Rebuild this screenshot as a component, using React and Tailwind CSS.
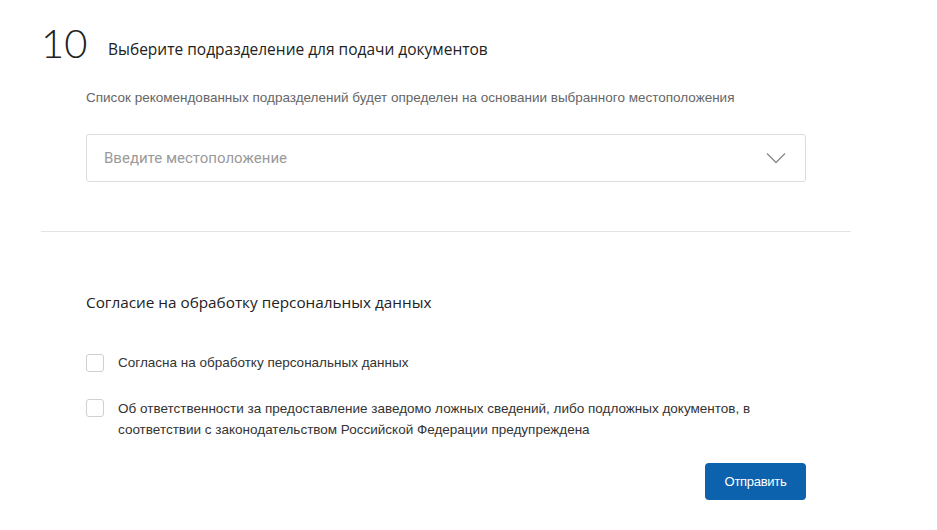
export default function App() {
  return (
    <div className="w-[937px] h-[530px] bg-white overflow-hidden" style={{ fontFamily: '"Liberation Sans", Arial, sans-serif' }}>
      <div className="pl-[41px] pt-[23px] w-[851px]">
        <div className="flex items-end">
          <span className="w-[46px] text-[40px] leading-[40px] text-[#222]" style={{ fontFamily: 'Lato, sans-serif', fontWeight: 300 }}>10</span>
          <span className="ml-[21px] mb-[4px] text-[15.5px] leading-[20px] font-medium text-[#222]" style={{ fontFamily: '"Open Sans", sans-serif' }}>Выберите подразделение для подачи документов</span>
        </div>
        <div className="pl-[45px]">
          <p className="mt-[27px] text-[13.5px] leading-[16px] text-[#666]">Список рекомендованных подразделений будет определен на основании выбранного местоположения</p>
          <div className="mt-[28px] w-[720px] h-[48px] border border-[#dcdcdc] rounded-[3px] flex items-center justify-between pl-[17px] pr-[19px]">
            <span className="text-[15px] text-[#9a9a9a]" style={{ fontFamily: 'Roboto, sans-serif' }}>Введите местоположение</span>
            <svg width="20" height="12" viewBox="0 0 20 12" fill="none">
              <path d="M1 1.5 L10 10.5 L19 1.5" stroke="#8a8a8a" strokeWidth="1.3" />
            </svg>
          </div>
        </div>
        <div className="mt-[49px] border-t border-[#e3e3e3]" />
        <div className="pl-[45px]">
          <h2 className="mt-[60px] text-[15.3px] leading-[20px] font-medium text-[#222]" style={{ fontFamily: '"Open Sans", sans-serif' }}>Согласие на обработку персональных данных</h2>
          <div className="mt-[40px] flex items-center gap-[14px]">
            <span className="w-[18px] h-[18px] border border-[#d0d0d0] rounded-[3px] shrink-0" />
            <span className="text-[13.5px] leading-[21px] text-[#333]">Согласна на обработку персональных данных</span>
          </div>
          <div className="mt-[25px] flex items-start gap-[14px]">
            <span className="mt-[1px] w-[18px] h-[18px] border border-[#d0d0d0] rounded-[3px] shrink-0" />
            <span className="text-[13.5px] leading-[21px] text-[#333] w-[680px]">Об ответственности за предоставление заведомо ложных сведений, либо подложных документов, в соответствии с законодательством Российской Федерации предупреждена</span>
          </div>
          <div className="w-[720px] flex justify-end mt-[23px]">
            <button className="w-[101px] h-[37px] bg-[#0d62ad] rounded-[4px] text-white text-[13px] tracking-[-0.3px]">Отправить</button>
          </div>
        </div>
      </div>
    </div>
  );
}
